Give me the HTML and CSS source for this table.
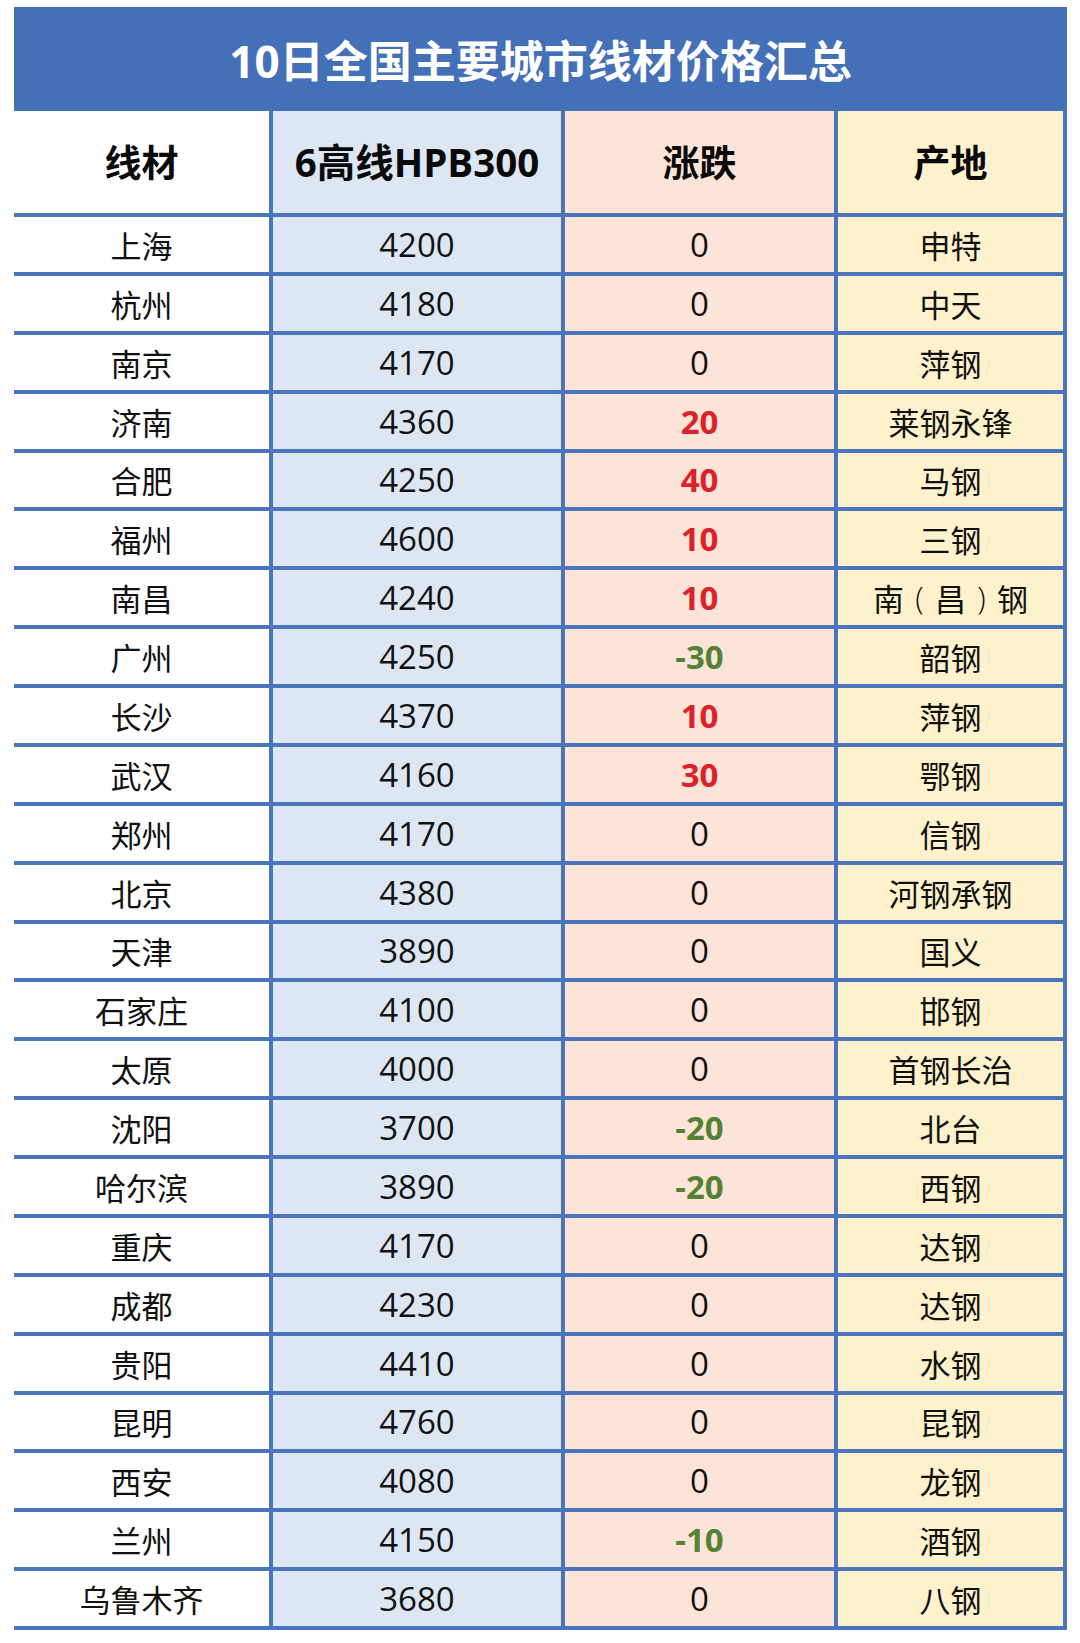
FILE: index.html
```html
<!DOCTYPE html>
<html lang="zh-CN">
<head>
<meta charset="utf-8">
<title>10日全国主要城市线材价格汇总</title>
<link rel="stylesheet" href="styles.css">
</head>
<body>
<div class="sheet">
  <div class="title">10日全国主要城市线材价格汇总</div>
  <div class="grid">
    <div class="cell c1 head">线材</div><div class="cell c2 head">6高线HPB300</div><div class="cell c3 head">涨跌</div><div class="cell c4 head">产地</div>
    <div class="cell c1">上海</div><div class="cell c2 num">4200</div><div class="cell c3 num">0</div><div class="cell c4">申特</div>
    <div class="cell c1">杭州</div><div class="cell c2 num">4180</div><div class="cell c3 num">0</div><div class="cell c4">中天</div>
    <div class="cell c1">南京</div><div class="cell c2 num">4170</div><div class="cell c3 num">0</div><div class="cell c4">萍钢</div>
    <div class="cell c1">济南</div><div class="cell c2 num">4360</div><div class="cell c3 num up">20</div><div class="cell c4">莱钢永锋</div>
    <div class="cell c1">合肥</div><div class="cell c2 num">4250</div><div class="cell c3 num up">40</div><div class="cell c4">马钢</div>
    <div class="cell c1">福州</div><div class="cell c2 num">4600</div><div class="cell c3 num up">10</div><div class="cell c4">三钢</div>
    <div class="cell c1">南昌</div><div class="cell c2 num">4240</div><div class="cell c3 num up">10</div><div class="cell c4">南<span class="paren">(</span>昌<span class="paren">)</span>钢</div>
    <div class="cell c1">广州</div><div class="cell c2 num">4250</div><div class="cell c3 num down">-30</div><div class="cell c4">韶钢</div>
    <div class="cell c1">长沙</div><div class="cell c2 num">4370</div><div class="cell c3 num up">10</div><div class="cell c4">萍钢</div>
    <div class="cell c1">武汉</div><div class="cell c2 num">4160</div><div class="cell c3 num up">30</div><div class="cell c4">鄂钢</div>
    <div class="cell c1">郑州</div><div class="cell c2 num">4170</div><div class="cell c3 num">0</div><div class="cell c4">信钢</div>
    <div class="cell c1">北京</div><div class="cell c2 num">4380</div><div class="cell c3 num">0</div><div class="cell c4">河钢承钢</div>
    <div class="cell c1">天津</div><div class="cell c2 num">3890</div><div class="cell c3 num">0</div><div class="cell c4">国义</div>
    <div class="cell c1">石家庄</div><div class="cell c2 num">4100</div><div class="cell c3 num">0</div><div class="cell c4">邯钢</div>
    <div class="cell c1">太原</div><div class="cell c2 num">4000</div><div class="cell c3 num">0</div><div class="cell c4">首钢长治</div>
    <div class="cell c1">沈阳</div><div class="cell c2 num">3700</div><div class="cell c3 num down">-20</div><div class="cell c4">北台</div>
    <div class="cell c1">哈尔滨</div><div class="cell c2 num">3890</div><div class="cell c3 num down">-20</div><div class="cell c4">西钢</div>
    <div class="cell c1">重庆</div><div class="cell c2 num">4170</div><div class="cell c3 num">0</div><div class="cell c4">达钢</div>
    <div class="cell c1">成都</div><div class="cell c2 num">4230</div><div class="cell c3 num">0</div><div class="cell c4">达钢</div>
    <div class="cell c1">贵阳</div><div class="cell c2 num">4410</div><div class="cell c3 num">0</div><div class="cell c4">水钢</div>
    <div class="cell c1">昆明</div><div class="cell c2 num">4760</div><div class="cell c3 num">0</div><div class="cell c4">昆钢</div>
    <div class="cell c1">西安</div><div class="cell c2 num">4080</div><div class="cell c3 num">0</div><div class="cell c4">龙钢</div>
    <div class="cell c1">兰州</div><div class="cell c2 num">4150</div><div class="cell c3 num down">-10</div><div class="cell c4">酒钢</div>
    <div class="cell c1">乌鲁木齐</div><div class="cell c2 num">3680</div><div class="cell c3 num">0</div><div class="cell c4">八钢</div>
  </div>
</div>
</body>
</html>
```
FILE: styles.css
```css
html, body {
  margin: 0;
  padding: 0;
  background: #ffffff;
}
body {
  font-family: "Noto Sans CJK SC", "Noto Sans", sans-serif;
  color: #111111;
}
.sheet {
  width: 1053px;
  margin: 7px 0 0 14px;
}
.title {
  height: 104px;
  background: #4470b8;
  color: #ffffff;
  font-family: "Open Sans", "Noto Sans CJK SC", sans-serif;
  font-weight: 700;
  font-size: 44px;
  display: flex;
  align-items: center;
  justify-content: center;
}
.grid {
  display: grid;
  grid-template-columns: 255px 288px 269px 225px;
  grid-template-rows: 102px repeat(24, 54.875px);
  column-gap: 4px;
  row-gap: 4px;
  padding: 0 4px 4px 0;
  background: #4a74bc;
}
.cell {
  display: flex;
  align-items: center;
  justify-content: center;
  font-size: 31px;
  line-height: 1;
  white-space: nowrap;
}
.c1 { background: #ffffff; }
.c2 { background: #dde7f3; }
.c3 { background: #fce4d8; }
.c4 { background: #fef2cd; }
.head {
  font-weight: 700;
  font-size: 37px;
  color: #0a0a0a;
  font-family: "Open Sans", "Noto Sans CJK SC", sans-serif;
}
.head.c2 { font-size: 38.5px; }
.num {
  font-family: "Open Sans", "Noto Sans CJK SC", sans-serif;
  font-size: 33px;
}
.paren {
  display: inline-block;
  width: 1em;
  text-align: center;
  font-family: "Open Sans", sans-serif;
  font-weight: 300;
}
.up {
  color: #dc2229;
  font-weight: 700;
}
.down {
  color: #548235;
  font-weight: 700;
}
```
